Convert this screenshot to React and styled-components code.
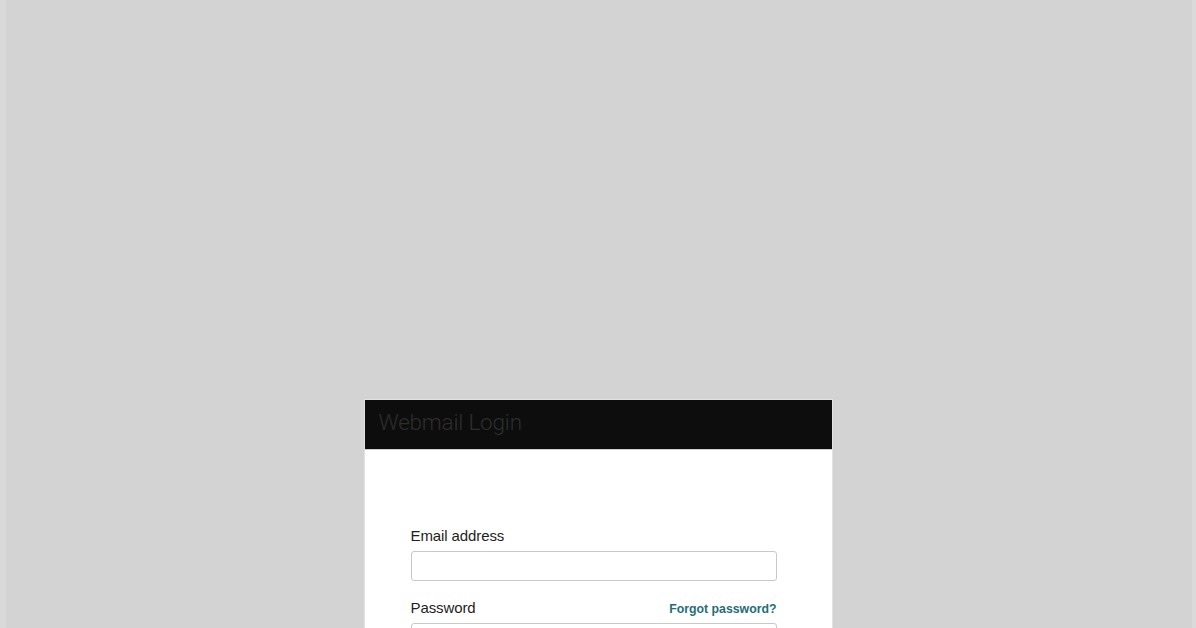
import styled, { createGlobalStyle } from "styled-components";

const GlobalStyle = createGlobalStyle`
  html, body {
    margin: 0;
    padding: 0;
    height: 100%;
    overflow: hidden;
    background: #d3d3d3;
  }
  body {
    font-family: Roboto, "Liberation Sans", Arial, sans-serif;
  }
`;

const Page = styled.div`
  height: 628px;
  display: flex;
  justify-content: center;
  align-items: flex-start;
  padding-top: 399px;
  box-sizing: border-box;
  overflow: hidden;
  background: linear-gradient(to right, #d9d9d9 0, #d9d9d9 6px, #d3d3d3 6px, #d3d3d3 calc(100% - 4px), #dadada calc(100% - 4px));
`;

const Card = styled.div`
  width: 469px;
  flex-shrink: 0;
  background: #fff;
  border: 1px solid #e2e2e2;
  box-sizing: border-box;
  display: flex;
  flex-direction: column;
`;

const Header = styled.div`
  height: 50px;
  flex-shrink: 0;
  background: #0d0d0d;
  display: flex;
  align-items: center;
  padding: 0 14px 5px;
  box-sizing: border-box;
  border-bottom: 1px solid #d0d0d0;
`;

const Title = styled.h1`
  margin: 0;
  font-weight: 300;
  font-size: 22.5px;
  color: #2e2e2e;
  letter-spacing: -0.2px;
`;

const Body = styled.form`
  flex-shrink: 0;
  display: flex;
  flex-direction: column;
  padding: 77px 55px 60px 46px;
`;

const Field = styled.div`
  display: flex;
  flex-direction: column;
  margin-bottom: 18px;
`;

const LabelRow = styled.div`
  display: flex;
  justify-content: space-between;
  align-items: baseline;
  height: 18px;
  margin-bottom: 6px;
`;

const Label = styled.label`
  font-family: "Liberation Sans", Arial, sans-serif;
  font-size: 15px;
  line-height: 18px;
  color: #1e1e1e;
  letter-spacing: -0.1px;
`;

const Forgot = styled.a`
  font-family: "Liberation Sans", Arial, sans-serif;
  font-size: 12.3px;
  font-weight: 700;
  color: #1f6e78;
  text-decoration: none;
`;

const Input = styled.input`
  height: 30px;
  flex-shrink: 0;
  box-sizing: border-box;
  border: 1px solid #c9c9c9;
  border-radius: 3px;
  padding: 0 8px;
  font-size: 14px;
  outline: none;
`;

export default function App() {
  return (
    <>
      <GlobalStyle />
      <Page>
        <Card>
          <Header>
            <Title>Webmail Login</Title>
          </Header>
          <Body onSubmit={(e) => e.preventDefault()}>
            <Field>
              <LabelRow>
                <Label htmlFor="email">Email address</Label>
              </LabelRow>
              <Input id="email" type="text" />
            </Field>
            <Field>
              <LabelRow>
                <Label htmlFor="password">Password</Label>
                <Forgot href="#">Forgot password?</Forgot>
              </LabelRow>
              <Input id="password" type="password" />
            </Field>
          </Body>
        </Card>
      </Page>
    </>
  );
}
